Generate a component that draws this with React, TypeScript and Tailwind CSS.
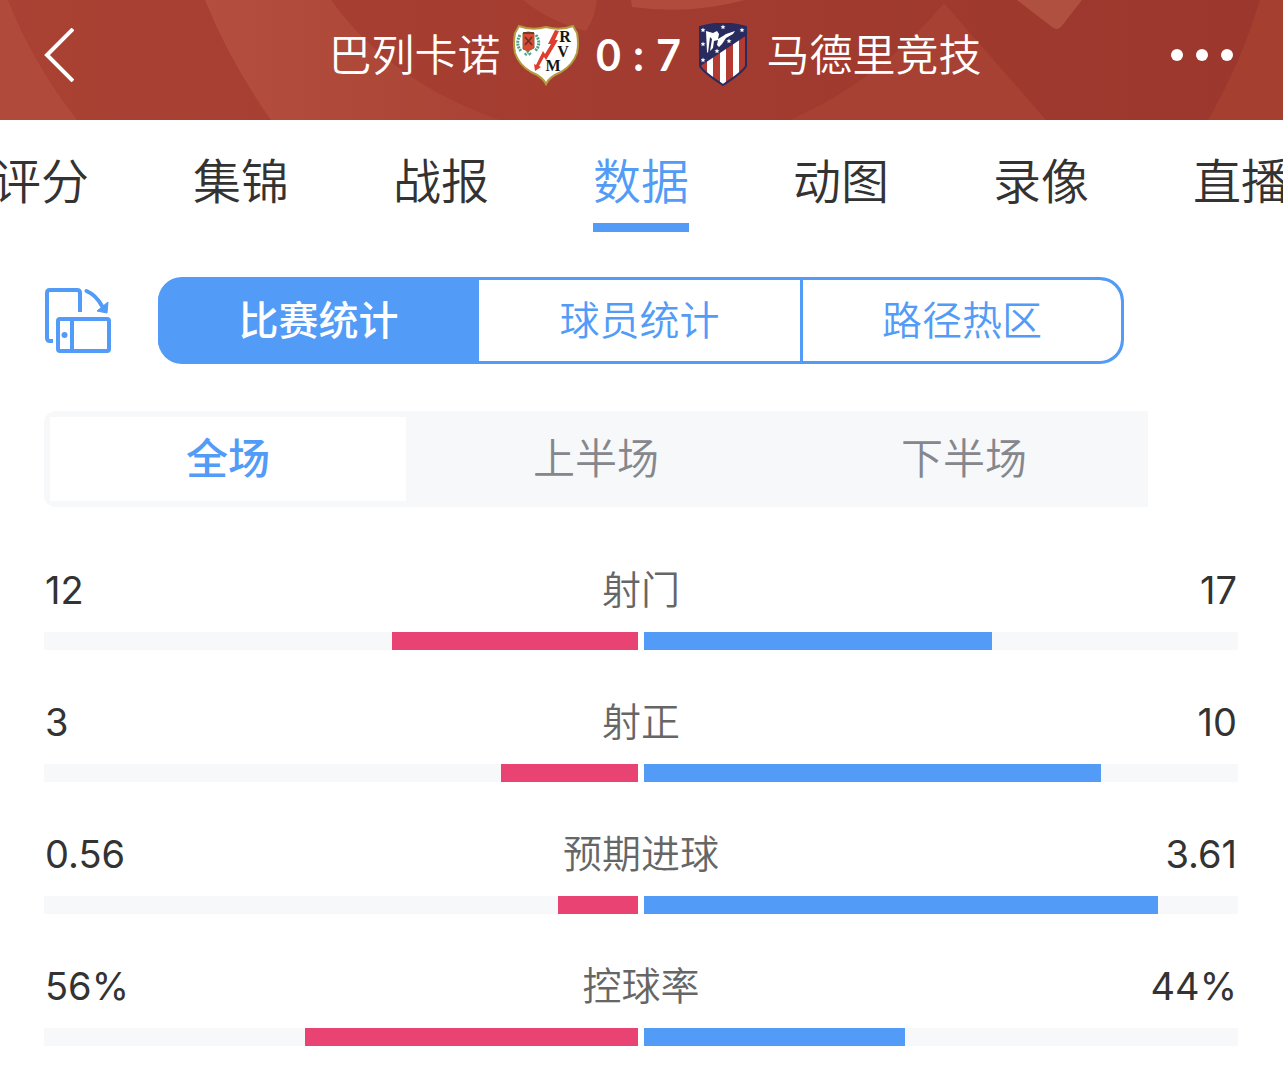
import { useState } from "react";

interface Stat {
  label: string;
  home: number;
  away: number;
  unit?: string;
}

const tabs = ["评分", "集锦", "战报", "数据", "动图", "录像", "直播"];
const views = ["比赛统计", "球员统计", "路径热区"];
const periods = ["全场", "上半场", "下半场"];

const stats: Stat[] = [
  { label: "射门", home: 12, away: 17 },
  { label: "射正", home: 3, away: 10 },
  { label: "预期进球", home: 0.56, away: 3.61 },
  { label: "控球率", home: 56, away: 44, unit: "%" },
];

const HeaderBackground = () => (
  <svg
    className="absolute inset-0 w-full h-full"
    viewBox="0 0 1283 120"
    preserveAspectRatio="none"
    aria-hidden="true"
  >
    <defs>
      <linearGradient id="base" x1="0" x2="1" y1="0" y2="0">
        <stop offset="0" stopColor="#aa4234" />
        <stop offset="0.5" stopColor="#a33c30" />
        <stop offset="1" stopColor="#9b372d" />
      </linearGradient>
      <linearGradient id="band" x1="0" x2="1" y1="0" y2="0">
        <stop offset="0" stopColor="#b44e3e" />
        <stop offset="1" stopColor="#a94335" />
      </linearGradient>
    </defs>
    <rect width="1283" height="120" fill="url(#base)" />
    <path d="M0 0H8Q32 62 77 120H0Z" fill="#b04a3a" />
    <path d="M205 0H331Q390 82 500 120H271Q230 62 205 0Z" fill="url(#band)" />
    <path d="M523 0H597Q595 18 586 31Q550 22 523 0Z" fill="#ab4638" />
    <path d="M631 0H745Q690 15 632 7Z" fill="#b04b3d" />
    <path d="M790 120Q880 80 944 3L1046 120Z" fill="#a74133" />
    <path d="M1017 0H1082L1061 27Q1057 31 1052 27Z" fill="#b05041" />
    <path d="M1260 0H1283V120H1208Q1240 65 1260 0Z" fill="#a54031" />
  </svg>
);

const HomeCrest = () => (
  <svg width="66" height="62" viewBox="0 0 66 62" role="img" aria-label="巴列卡诺">
    <path
      d="M6 2Q19 7 33 3Q47 7 60 2L64 9Q66 20 64 29Q60 41 48 48Q36 53 33 60Q30 53 18 48Q6 41 2 29Q0 20 2 9Z"
      fill="#fff"
      stroke="#b29a3e"
      strokeWidth="2"
    />
    <path
      d="M7 11Q2 20 8 27M23 11Q29 20 22 27M12 31L15 28L18 31"
      fill="none"
      stroke="#4fa08a"
      strokeWidth="3"
      strokeDasharray="2 1"
    />
    <path d="M10 9Q15 7 21 9V24L15 27L10 25Z" fill="#db4a31" stroke="#8f6132" />
    <path d="M10 9H21M12 13L19 21M19 13L12 21" stroke="#57352a" strokeWidth="1.5" />
    <path
      d="M42 6L46 7L42 16H45L33 36L31 33L26 42L28 43L22 47L21 40L23 41L30 27L32 30L38 20H35Z"
      fill="#df3d2d"
    />
    <g
      fill="#151515"
      fontFamily="Liberation Serif, serif"
      fontWeight="700"
      fontSize="16"
      textAnchor="middle"
    >
      <text x="52" y="18">R</text>
      <text x="50" y="33">V</text>
      <text x="40" y="47">M</text>
    </g>
  </svg>
);

const starPoints = [
  [4, 7],
  [24, 4],
  [43, 7],
  [4, 21],
  [4, 37],
  [30, 18],
  [18, 28],
];

const AwayCrest = () => (
  <svg width="48" height="64" viewBox="0 0 48 64" role="img" aria-label="马德里竞技">
    <defs>
      <clipPath id="shield">
        <path d="M1 4Q24 -3 47 4V43Q44 49 24 62Q4 49 1 43Z" />
      </clipPath>
    </defs>
    <g clipPath="url(#shield)">
      <rect width="48" height="64" fill="#b33b32" />
      <path d="M8 20H14V64H8ZM21 20H27V64H21ZM34 10H40V64H34ZM46 10H48V64H46Z" fill="#fff" />
      <path d="M0 0H48V12L0 44Z" fill="#292b5f" />
      <path
        d="M7 8L14 10L18 8L20 11L19 16L24 13L27 11L36 8L34 11L27 15L23 21L20 24L18 22L19 17L15 18L14 25L11 28L13 16L11 14L9 30L8 29Z"
        fill="#fff"
      />
      {starPoints.map(([x, y]) => (
        <path
          key={`${x}-${y}`}
          transform={`translate(${x} ${y})`}
          d="M0 -2.5L.7 -.8L2.5 -.7L1.1 .5L1.6 2.3L0 1.3L-1.6 2.3L-1.1 .5L-2.5 -.7L-.7 -.8Z"
          fill="#fff"
        />
      ))}
    </g>
    <path
      d="M1 4Q24 -3 47 4V43Q44 49 24 62Q4 49 1 43Z"
      fill="none"
      stroke="#292b5f"
      strokeWidth="2"
    />
  </svg>
);

const RotateIcon = () => (
  <svg width="68" height="66" viewBox="0 0 68 66" fill="none" aria-hidden="true">
    <path
      d="M9 53H6Q3 53 3 50V5Q3 2 6 2H33Q36 2 36 5V24"
      stroke="#529bf7"
      strokeWidth="4"
    />
    <rect x="14" y="31" width="51" height="32" rx="2" stroke="#529bf7" strokeWidth="4" />
    <path d="M28 31V63" stroke="#529bf7" strokeWidth="4" />
    <circle cx="20.5" cy="47" r="3" fill="#529bf7" />
    <path d="M42.5 3Q52 7 58 18" stroke="#529bf7" strokeWidth="4" strokeLinecap="round" />
    <path d="M64 14L63 25L53 23Z" fill="#529bf7" stroke="#529bf7" strokeLinejoin="round" />
  </svg>
);

const Header = () => (
  <header className="relative h-[120px] text-white">
    <HeaderBackground />
    <div className="relative flex items-center h-[110px] pl-[44px] pr-[50px]">
      <div className="flex flex-1 items-center justify-between">
        <button aria-label="返回">
          <svg width="30" height="54" viewBox="0 0 30 54" fill="none">
            <path d="M29 1L3 27L29 53" stroke="currentColor" strokeWidth="4" />
          </svg>
        </button>
        <div className="flex items-center gap-3">
          <span className="text-[43px] leading-[60px] font-[350]">巴列卡诺</span>
          <HomeCrest />
        </div>
      </div>
      <div className="flex justify-center gap-3 w-[120px] text-[43px] leading-[60px] font-bold font-['Lato',sans-serif]">
        <span>0</span>
        <span>:</span>
        <span>7</span>
      </div>
      <div className="flex flex-1 items-center justify-between">
        <div className="flex items-center gap-5">
          <AwayCrest />
          <span className="text-[43px] leading-[60px] font-[350]">马德里竞技</span>
        </div>
        <button aria-label="更多">
          <svg width="62" height="12" viewBox="0 0 62 12" fill="currentColor">
            <circle cx="6" cy="6" r="6" />
            <circle cx="31" cy="6" r="6" />
            <circle cx="56" cy="6" r="6" />
          </svg>
        </button>
      </div>
    </div>
  </header>
);

const StatRow = ({ label, home, away, unit = "" }: Stat) => {
  const total = home + away;

  return (
    <li>
      <div className="grid grid-cols-3 px-px text-[38px] leading-[56px] text-[#333]">
        <span>
          {home}
          {unit}
        </span>
        <span className="text-center text-[39px] text-[#666] font-[350]">{label}</span>
        <span className="text-right">
          {away}
          {unit}
        </span>
      </div>
      <div className="flex gap-[6px] h-[18px] mt-[14px]">
        <div className="flex flex-1 justify-end bg-[#f6f8fa]">
          <div className="bg-[#e84373]" style={{ width: `${(home / total) * 100}%` }} />
        </div>
        <div className="flex flex-1 bg-[#f6f8fa]">
          <div className="bg-[#529bf7]" style={{ width: `${(away / total) * 100}%` }} />
        </div>
      </div>
    </li>
  );
};

const App = () => {
  const [tab, setTab] = useState<string>("数据");
  const [view, setView] = useState<string>("比赛统计");
  const [period, setPeriod] = useState<string>("全场");

  return (
    <div className="min-h-screen bg-white font-['Inter','Noto_Sans_CJK_SC',sans-serif]">
      <Header />

      <nav className="flex justify-center h-[112px] pr-px overflow-hidden">
        {tabs.map((name) => (
          <button
            key={name}
            onClick={() => setTab(name)}
            className={`flex flex-col items-center justify-between w-[200px] shrink-0 pt-[29px] text-[48px] leading-[66px] font-[350] ${
              tab === name ? "text-[#529bf7]" : "text-[#333]"
            }`}
          >
            {name}
            {tab === name && <span className="w-[96px] h-[9px] bg-[#529bf7]" />}
          </button>
        ))}
      </nav>

      <main className="pl-[44px] pr-[45px] pb-10">
        <div className="grid grid-cols-[114px_1fr_114px] items-center mt-[45px]">
          <button aria-label="横屏">
            <RotateIcon />
          </button>
          <div className="grid grid-cols-3 h-[87px] border-y-[3px] border-r-[3px] border-[#529bf7] bg-[#529bf7] rounded-3xl overflow-hidden">
            {views.map((name) => (
              <button
                key={name}
                onClick={() => setView(name)}
                className={`text-[40px] leading-[56px] border-[#529bf7] last:border-l-[3px] last:rounded-r-[21px] ${
                  view === name
                    ? "bg-[#529bf7] text-white font-medium"
                    : "bg-white text-[#529bf7] font-[350] first:border-l-[3px] first:rounded-l-3xl"
                }`}
              >
                {name}
              </button>
            ))}
          </div>
        </div>

        <div className="grid grid-cols-3 h-[96px] mt-[47px] mr-[90px] bg-[#f6f8fa] rounded-l-xl">
          {periods.map((name) => (
            <button
              key={name}
              onClick={() => setPeriod(name)}
              className={`m-[6px] text-[42px] leading-[60px] ${
                period === name
                  ? "bg-white text-[#529bf7] font-medium"
                  : "text-[#85878c] font-[350]"
              }`}
            >
              {name}
            </button>
          ))}
        </div>

        <ul className="flex flex-col gap-[44px] mt-[55px]">
          {stats.map((stat) => (
            <StatRow key={stat.label} {...stat} />
          ))}
        </ul>
      </main>
    </div>
  );
};

export default App;
